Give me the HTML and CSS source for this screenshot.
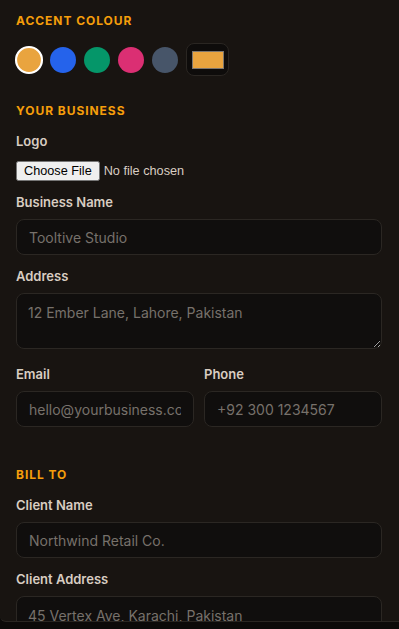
FILE: index.html
```html
<!DOCTYPE html>
<html>
<head>
  <title>Invoice Settings</title>
  <link rel="stylesheet" href="styles.css">
</head>
<body>
  <div class="panel">

    <div class="section">
      <h2 class="section-title">Accent Colour</h2>
      <div class="swatches">
        <span class="swatch active" style="background:#e9a43f"></span>
        <span class="swatch" style="background:#2563eb"></span>
        <span class="swatch" style="background:#059669"></span>
        <span class="swatch" style="background:#db2f73"></span>
        <span class="swatch" style="background:#475569"></span>
        <span class="picker"><span class="picker-fill" style="background:#e9a43f"></span></span>
      </div>
    </div>

    <div class="section">
      <h2 class="section-title">Your Business</h2>
      <div class="field field-logo">
        <label>Logo</label>
        <input type="file" class="file">
      </div>
      <div class="field">
        <label>Business Name</label>
        <input type="text" placeholder="Tooltive Studio">
      </div>
      <div class="field">
        <label>Address</label>
        <textarea placeholder="12 Ember Lane, Lahore, Pakistan"></textarea>
      </div>
      <div class="row">
        <div class="field">
          <label>Email</label>
          <input type="text" placeholder="hello@yourbusiness.com">
        </div>
        <div class="field">
          <label>Phone</label>
          <input type="text" placeholder="+92 300 1234567">
        </div>
      </div>
    </div>

    <div class="section">
      <h2 class="section-title">Bill To</h2>
      <div class="field">
        <label>Client Name</label>
        <input type="text" placeholder="Northwind Retail Co.">
      </div>
      <div class="field">
        <label>Client Address</label>
        <textarea placeholder="45 Vertex Ave, Karachi, Pakistan"></textarea>
      </div>
    </div>

  </div>
</body>
</html>
```

FILE: styles.css
```css
body {
  margin: 0;
  background-color: #0c0a09;
  font-family: Inter, "Noto Sans", sans-serif;
}

.panel {
  height: 622px;
  overflow: hidden;
  background-color: #181411;
  border-bottom: 1px solid #2a2622;
  border-bottom-left-radius: 6px;
  padding: 13px 17px 0 16px;
  box-sizing: border-box;
}

.section {
  margin-bottom: 27px;
}

.section-title {
  margin: 0 0 14px;
  font-size: 12px;
  line-height: 16px;
  font-weight: 700;
  letter-spacing: 0.95px;
  text-transform: uppercase;
  color: #f59e0b;
}

.swatches {
  display: flex;
  align-items: center;
  gap: 8px;
}

.swatch {
  width: 26px;
  height: 26px;
  border-radius: 50%;
  box-sizing: border-box;
}

.swatch.active {
  border: 2px solid #fff;
  transform: scale(1.08);
}

.picker {
  width: 43px;
  height: 33px;
  padding: 7px 4px 6px 5px;
  box-sizing: border-box;
  background-color: #0e0c0b;
  border: 1px solid #2a2622;
  border-radius: 8px;
}

.picker-fill {
  display: block;
  height: 100%;
  border: 1px solid #7d7770;
  box-sizing: border-box;
}

.field {
  margin-bottom: 13px;
}

.field label {
  display: block;
  margin-bottom: 9px;
  font-size: 13px;
  line-height: 16px;
  font-weight: 600;
  color: #d8cdc2;
}

.field input[type="text"],
.field textarea {
  display: block;
  width: 100%;
  height: 36px;
  padding: 0 12px;
  box-sizing: border-box;
  background-color: #100e0d;
  border: 1px solid #2b2723;
  border-radius: 8px;
  font-family: Inter, "Noto Sans", sans-serif;
  font-size: 14px;
  color: #e7e0d8;
}

.field textarea {
  height: 56px;
  padding: 9px 11px;
  line-height: 20px;
  resize: vertical;
  margin-bottom: 17px;
}

.field input::placeholder,
.field textarea::placeholder {
  color: #77716b;
}

.field .file {
  display: block;
  margin: 12px 0 0;
  color: #d8cdc2;
  font-size: 12.7px;
}

.row {
  display: grid;
  grid-template-columns: 1fr 1fr;
  gap: 10px;
  margin-bottom: 40px;
}

.row .field {
  margin-bottom: 0;
}
```
